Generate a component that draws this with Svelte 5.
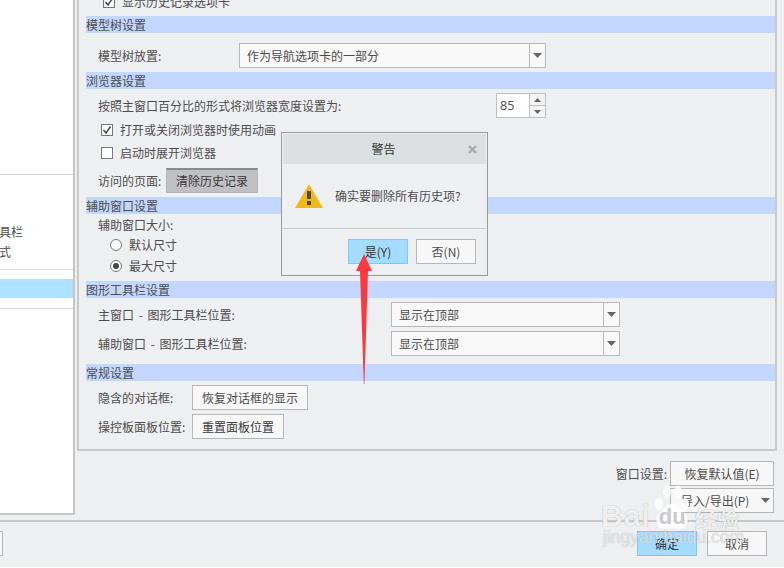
<script>
  const navLabels = ["具栏", "式"];
</script>

{#snippet arrowDown()}
  <svg class="tri" width="9" height="5" viewBox="0 0 9 5"><path d="M0 0h9L4.5 5z" fill="#666" /></svg>
{/snippet}

{#snippet combo(text, width)}
  <div class="combo" style="width: {width}px">
    <span class="combo-text">{text}</span>
    <span class="combo-btn">{@render arrowDown()}</span>
  </div>
{/snippet}

<div class="screen">
  <div class="upper">
    <aside class="nav">
      <div class="nav-group">
        {#each navLabels as label}
          <div class="nav-item">{label}</div>
        {/each}
      </div>
      <div class="nav-selected-wrap">
        <div class="nav-selected"></div>
      </div>
    </aside>

    <div class="content">
      <div class="panel">
        <div class="settings">
          <label class="check cut"><span class="box checked"><svg width="10" height="10" viewBox="0 0 10 10"><path d="M1.5 5l2.5 3 4.5-6.5" fill="none" stroke="#444" stroke-width="1.4" /></svg></span>显示历史记录选项卡</label>

          <h3 class="band">模型树设置</h3>
          <div class="row r1">
            <span class="label w141">模型树放置:</span>
            {@render combo("作为导航选项卡的一部分", 307)}
          </div>

          <h3 class="band">浏览器设置</h3>
          <div class="row r2">
            <span class="label w398">按照主窗口百分比的形式将浏览器宽度设置为:</span>
            <div class="spin">
              <span class="spin-val">85</span>
              <span class="spin-btns">
                <span><svg width="7" height="4" viewBox="0 0 7 4"><path d="M0 4h7L3.5 0z" fill="#666" /></svg></span>
                <span><svg width="7" height="4" viewBox="0 0 7 4"><path d="M0 0h7L3.5 4z" fill="#666" /></svg></span>
              </span>
            </div>
          </div>
          <label class="check c1"><span class="box checked"><svg width="10" height="10" viewBox="0 0 10 10"><path d="M1.5 5l2.5 3 4.5-6.5" fill="none" stroke="#444" stroke-width="1.4" /></svg></span>打开或关闭浏览器时使用动画</label>
          <label class="check c2"><span class="box"></span>启动时展开浏览器</label>
          <div class="row r3">
            <span class="label w68">访问的页面:</span>
            <button class="btn pressed">清除历史记录</button>
          </div>

          <h3 class="band">辅助窗口设置</h3>
          <div class="plain">辅助窗口大小:</div>
          <label class="radio rd1"><span class="dot"></span>默认尺寸</label>
          <label class="radio rd2"><span class="dot on"></span>最大尺寸</label>

          <h3 class="band b4">图形工具栏设置</h3>
          <div class="row r4">
            <span class="label w293 spaced">主窗口 - 图形工具栏位置:</span>
            {@render combo("显示在顶部", 229)}
          </div>
          <div class="row r5">
            <span class="label w293 spaced">辅助窗口 - 图形工具栏位置:</span>
            {@render combo("显示在顶部", 229)}
          </div>

          <h3 class="band">常规设置</h3>
          <div class="row r6">
            <span class="label w94">隐含的对话框:</span>
            <button class="btn restore">恢复对话框的显示</button>
          </div>
          <div class="row r7">
            <span class="label w94">操控板面板位置:</span>
            <button class="btn reset">重置面板位置</button>
          </div>
        </div>
      </div>

      <div class="window-actions">
        <div class="wa-row">
          <span class="wa-label">窗口设置:</span>
          <button class="btn wa-btn">恢复默认值(E)</button>
        </div>
        <div class="wa-row second">
          <button class="btn wa-btn menu">导入/导出(P) <span class="menu-tri">{@render arrowDown()}</span></button>
        </div>
      </div>
    </div>
  </div>

  <footer class="footer">
    <button class="btn stub"></button>
    <div class="footer-btns">
      <button class="btn primary">确定</button>
      <button class="btn cancel">取消</button>
    </div>
  </footer>

  <div class="dialog">
    <div class="dialog-title">
      <span>警告</span>
      <svg class="close" width="9" height="9" viewBox="0 0 9 9"><path d="M1 1l7 7M8 1l-7 7" stroke="#a8a8a8" stroke-width="2.2" /></svg>
    </div>
    <div class="dialog-body">
      <svg width="28" height="24" viewBox="0 0 28 24"><path d="M14 0L28 24H0z" fill="#f2b81b" /><rect x="12" y="7" width="4" height="8" fill="#4d4a3c" /><rect x="12" y="17" width="4" height="4" fill="#4d4a3c" /></svg>
      <span>确实要删除所有历史项?</span>
    </div>
    <div class="dialog-actions">
      <button class="btn primary">是(Y)</button>
      <button class="btn dlg-no">否(N)</button>
    </div>
  </div>

  <svg class="arrow" width="20" height="132" viewBox="0 0 20 132"><path d="M8 0L16 17H12L8.4 130H7.8L4 17H0z" fill="#fb3a3f" /></svg>

  <div class="watermark">
    <div class="wm-top">
      <span class="wm-latin">Bai</span>
      <span class="wm-du">
        <svg class="paw" width="36" height="47" viewBox="0 0 36 47" fill="rgba(255,255,255,0.85)">
          <ellipse cx="5" cy="19" rx="4" ry="6" />
          <ellipse cx="13" cy="7" rx="4" ry="6.5" />
          <ellipse cx="24" cy="7" rx="4" ry="6.5" />
          <ellipse cx="31" cy="19" rx="4" ry="6" />
          <path d="M18 19c6 0 9 5 13 10 5 7 2 15-6 15-3 0-5-1-7-1s-4 1-7 1c-8 0-11-8-6-15 4-5 7-10 13-10z" />
        </svg>
        <span class="wm-latin du">du</span>
      </span>
      <span class="wm-cn">经验</span>
    </div>
    <div class="wm-url">jingyan.baidu.com</div>
  </div>
</div>

<style>
  :global(body) {
    margin: 0;
    background: #fff;
  }
  .screen {
    position: relative;
    width: 784px;
    height: 568px;
    overflow: hidden;
    background: #fff;
    color: #4c4c4c;
    font-family: "Noto Sans CJK SC", "Liberation Sans", sans-serif;
    font-size: 12px;
    line-height: 16px;
  }
  .upper {
    display: flex;
    height: 520px;
    background: #eeeff1;
  }
  .nav {
    box-sizing: border-box;
    width: 75px;
    height: 515px;
    flex: none;
    padding-top: 174px;
    background: #fff;
    border-right: 2px solid #c4c4c4;
    border-bottom: 2px solid #c4c4c4;
  }
  .nav-group {
    height: 96px;
    box-sizing: border-box;
    padding-top: 47px;
    border-top: 1px solid #d8d8d8;
    border-bottom: 1px solid #d8d8d8;
  }
  .nav-item {
    height: 20px;
    line-height: 20px;
    margin-left: -1px;
    white-space: nowrap;
  }
  .nav-selected-wrap {
    height: 39px;
    box-sizing: border-box;
    padding-top: 9px;
    border-bottom: 1px solid #d8d8d8;
  }
  .nav-selected {
    height: 19px;
    background: #aee0ff;
  }
  .content {
    margin-left: 2px;
    width: 700px;
  }
  .panel {
    box-sizing: border-box;
    height: 451px;
    width: 700px;
    overflow: hidden;
    border-left: 2px solid #c8c8c8;
    border-right: 2px solid #c8c8c8;
    border-bottom: 2px solid #c8c8c8;
    padding-left: 7px;
  }
  .settings {
    margin-top: -6px;
  }
  .band {
    margin: 0;
    height: 17px;
    line-height: 17px;
    font-size: 12px;
    font-weight: 400;
    background: #c3d7fe;
    color: #4c4c4c;
  }
  .row {
    display: flex;
    align-items: center;
    height: 25px;
    padding-left: 12px;
  }
  .label {
    flex: none;
    white-space: nowrap;
  }
  .spaced { word-spacing: 2px; }
  .w141 { width: 141px; }
  .w398 { width: 398px; }
  .w68 { width: 68px; }
  .w293 { width: 293px; }
  .w94 { width: 94px; }
  .r1 { margin-top: 10px; margin-bottom: 4px; }
  .r2 { margin-top: 4px; }
  .r3 { margin-top: 7px; margin-bottom: 4px; }
  .r4 { margin-top: 4px; }
  .r5 { margin-top: 4px; margin-bottom: 8px; }
  .r6 { margin-top: 4px; }
  .r7 { margin-top: 4px; }
  .b4 { margin-top: 7px; }

  .check, .radio {
    display: flex;
    align-items: center;
    height: 16px;
    white-space: nowrap;
  }
  .check { padding-left: 15px; gap: 7px; }
  .check.cut {
    height: 22px;
    padding-left: 17px;
    align-items: flex-start;
  }
  .check.cut .box { margin-top: 2px; }
  .c1 { margin-top: 4px; }
  .c2 { margin-top: 7px; }
  .radio { padding-left: 24px; gap: 7px; }
  .rd1 { margin-top: 4px; }
  .rd2 { margin-top: 5px; }
  .plain {
    margin-top: 3px;
    padding-left: 12px;
    height: 16px;
  }
  .box {
    box-sizing: border-box;
    width: 12px;
    height: 12px;
    flex: none;
    background: #fdfdfd;
    border: 1px solid #777;
    display: flex;
    align-items: center;
    justify-content: center;
  }
  .dot {
    box-sizing: border-box;
    width: 12px;
    height: 12px;
    flex: none;
    border: 1px solid #777;
    border-radius: 50%;
    background: #fdfdfd;
    display: flex;
    align-items: center;
    justify-content: center;
  }
  .dot.on::after {
    content: "";
    width: 6px;
    height: 6px;
    border-radius: 50%;
    background: #444;
  }
  .combo {
    box-sizing: border-box;
    height: 25px;
    flex: none;
    display: flex;
    background: #f8f8f8;
    border: 1px solid #b8b8b8;
  }
  .combo-text {
    flex: 1;
    padding-left: 7px;
    line-height: 23px;
  }
  .combo-btn {
    width: 15px;
    border-left: 1px solid #b8b8b8;
    display: flex;
    align-items: center;
    justify-content: center;
  }
  .spin {
    box-sizing: border-box;
    width: 50px;
    height: 25px;
    display: flex;
    background: #fff;
    border: 1px solid #c0c0c0;
  }
  .spin-val {
    flex: 1;
    padding-left: 3px;
    line-height: 23px;
    font-family: "Open Sans", sans-serif;
    font-size: 12.5px;
  }
  .spin-btns {
    width: 15px;
    display: flex;
    flex-direction: column;
    border-left: 1px solid #c0c0c0;
    background: #f4f4f4;
  }
  .spin-btns span {
    flex: 1;
    display: flex;
    align-items: center;
    justify-content: center;
  }
  .spin-btns span + span {
    border-top: 1px solid #c0c0c0;
  }
  .btn {
    box-sizing: border-box;
    height: 25px;
    padding: 0;
    font: inherit;
    color: inherit;
    background: #f7f7f7;
    border: 1px solid #b5b5b5;
    border-radius: 0;
    white-space: nowrap;
  }
  .pressed {
    width: 92px;
    background: #c0bfc3;
    color: #3a3a3a;
    border-top: 2px solid #8a8a8a;
  }
  .restore { width: 116px; }
  .reset { width: 92px; color: #3a3a3a; }
  .window-actions {
    padding-top: 10px;
    padding-right: 3px;
  }
  .wa-row {
    display: flex;
    justify-content: flex-end;
    align-items: center;
    gap: 3px;
  }
  .wa-row.second { margin-top: 2px; }
  .wa-btn { width: 104px; }
  .wa-label { white-space: nowrap; }
  .menu {
    position: relative;
    text-align: left;
    padding-left: 10px;
  }
  .menu-tri {
    position: absolute;
    right: 3px;
    top: 9px;
    display: flex;
  }
  .footer {
    box-sizing: border-box;
    width: 100%;
    height: 47px;
    background: #eeeff1;
    border-top: 2px solid #c8c8c8;
    display: flex;
    justify-content: space-between;
    padding-top: 9px;
    padding-right: 17px;
  }
  .stub {
    width: 3px;
    border-left: 0;
  }
  .footer-btns {
    display: flex;
    gap: 10px;
  }
  .primary {
    width: 60px;
    background: #a3dcff;
    border-color: #7cc8f8;
    color: #333;
  }
  .cancel, .dlg-no { width: 60px; }
  .dialog {
    position: absolute;
    left: 281px;
    top: 132px;
    box-sizing: border-box;
    width: 207px;
    height: 144px;
    background: #eeeff1;
    border: 1px solid #9a9a9a;
    padding: 1px;
  }
  .dialog-title {
    position: relative;
    height: 30px;
    line-height: 30px;
    text-align: center;
    background: #dcdfdf;
    color: #333;
    padding-right: 2px;
  }
  .close {
    position: absolute;
    right: 9px;
    top: 11px;
  }
  .dialog-body {
    display: flex;
    align-items: center;
    gap: 12px;
    height: 65px;
    box-sizing: border-box;
    padding-left: 12px;
    border-bottom: 1px solid #c8c8c8;
  }
  .dialog-actions {
    display: flex;
    justify-content: flex-end;
    gap: 8px;
    padding-top: 10px;
    padding-right: 10px;
  }
  .arrow {
    position: absolute;
    left: 356px;
    top: 254px;
  }
  .watermark {
    position: absolute;
    left: 601px;
    top: 485px;
    width: 150px;
    color: rgba(255, 255, 255, 0.85);
    pointer-events: none;
  }
  .wm-top {
    display: flex;
    align-items: flex-end;
    height: 47px;
  }
  .wm-latin {
    font-family: "Liberation Sans", sans-serif;
    font-weight: 700;
    font-size: 30px;
    line-height: 32px;
    letter-spacing: 1px;
    text-shadow: 0 0 1px rgba(130, 130, 130, 0.8);
  }
  .wm-du {
    position: relative;
    width: 36px;
    height: 47px;
    display: block;
    flex: none;
    margin-left: 3px;
  }
  .paw {
    position: absolute;
    left: 0;
    top: 0;
  }
  .du {
    position: absolute;
    left: 5px;
    bottom: 2px;
    font-size: 22px;
    line-height: 26px;
    letter-spacing: 0;
    color: #c9cacc;
    text-shadow: none;
  }
  .wm-cn {
    font-size: 22px;
    line-height: 30px;
    font-weight: 700;
    margin-left: 5px;
    white-space: nowrap;
    text-shadow: 0 0 1px rgba(130, 130, 130, 0.8);
  }
  .wm-url {
    margin-top: -5px;
    margin-left: 2px;
    font-family: "Liberation Sans", sans-serif;
    font-size: 17.5px;
    line-height: 20px;
    white-space: nowrap;
    color: rgba(255, 255, 255, 0.6);
    text-shadow: 0 0 1px rgba(130, 130, 130, 0.6);
  }
</style>
